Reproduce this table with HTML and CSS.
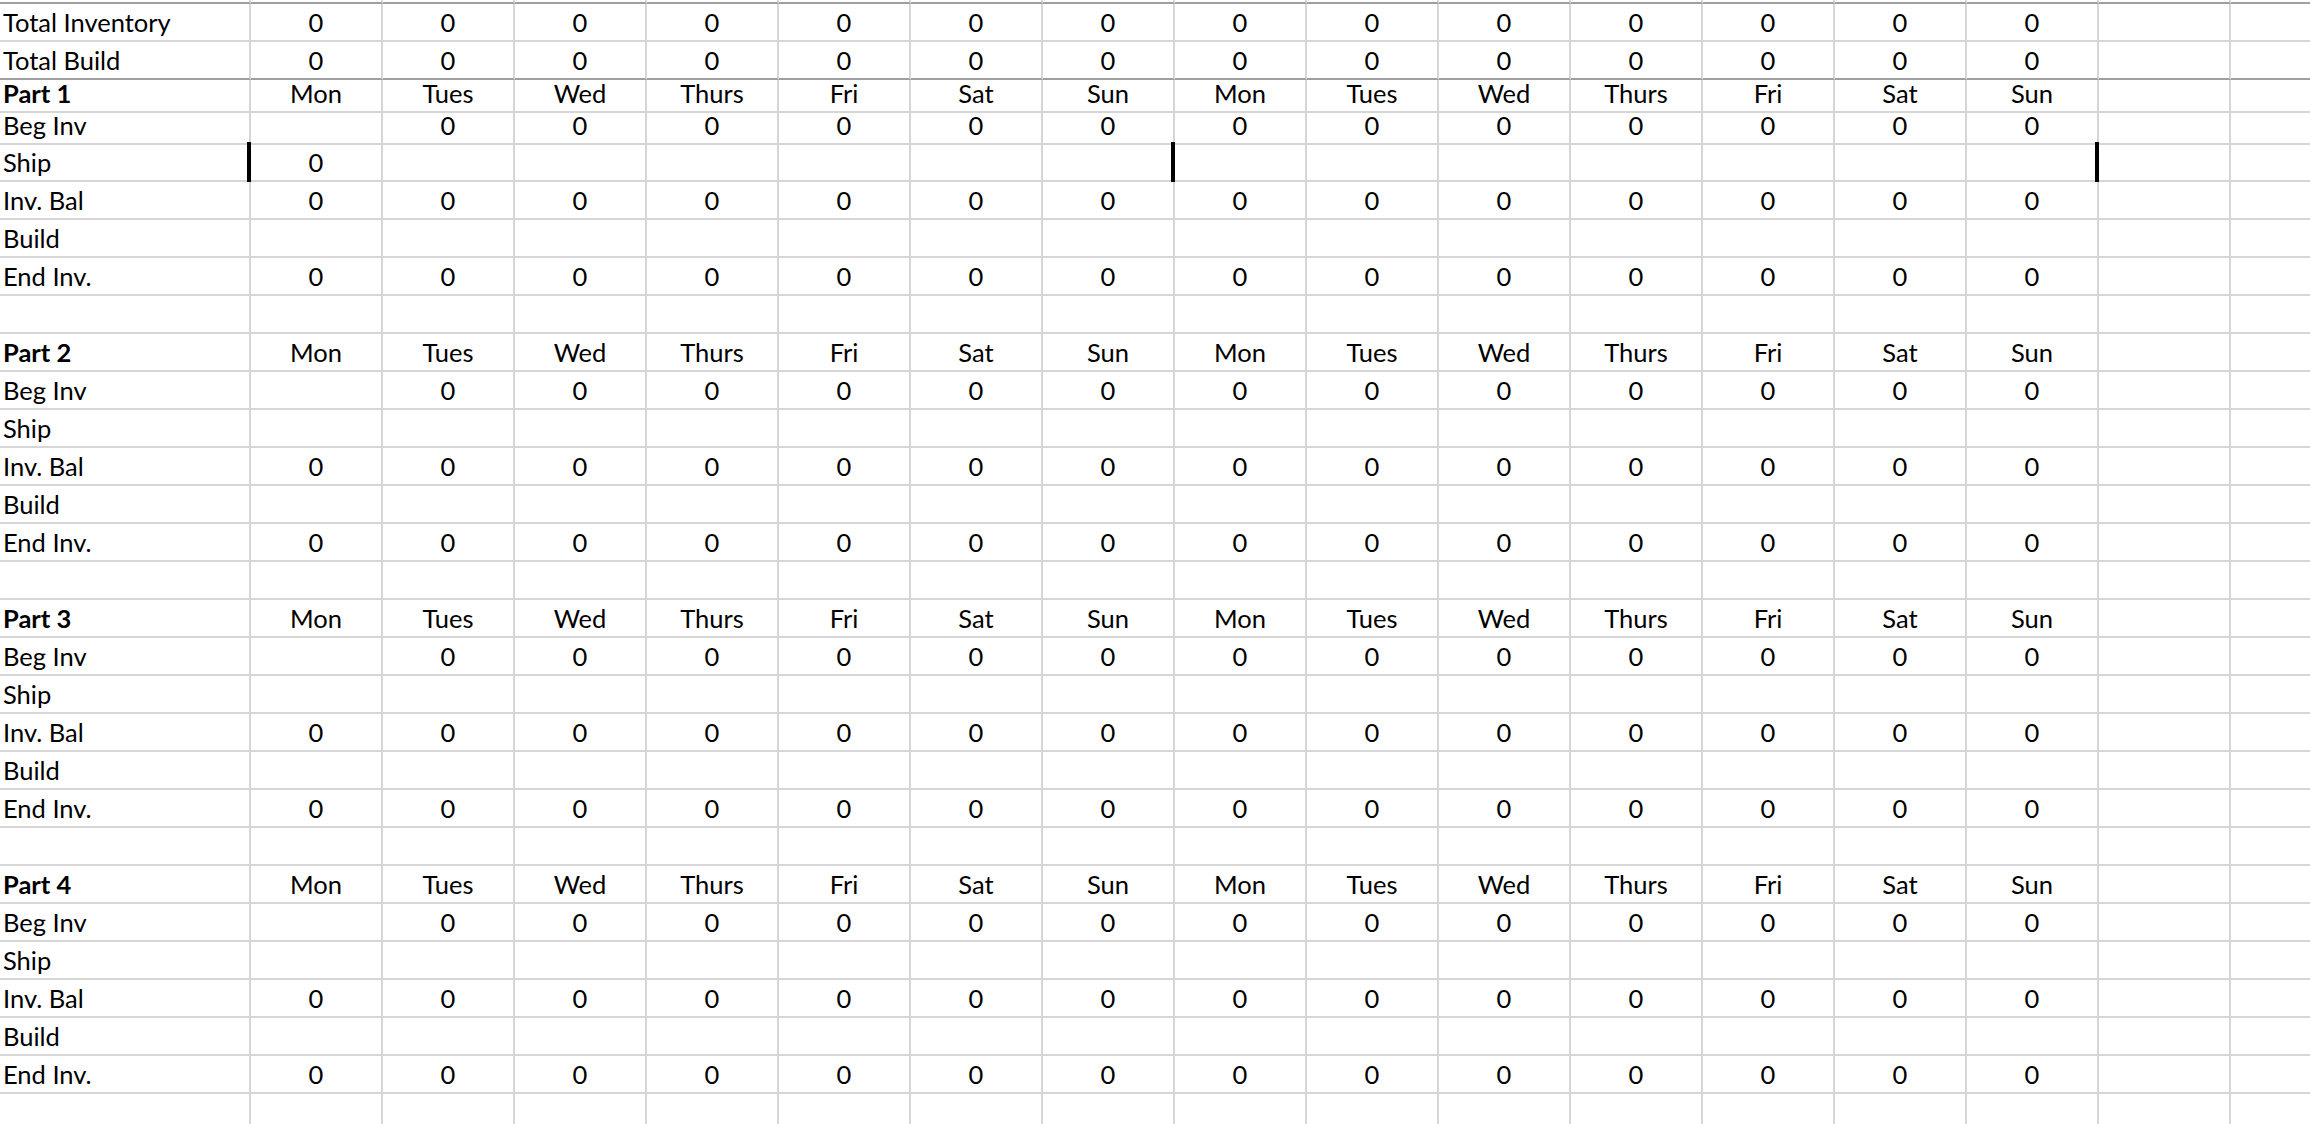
FILE: index.html
```html
<!DOCTYPE html>
<html>
<head>
<meta charset="utf-8">
<link rel="stylesheet" href="styles.css">
</head>
<body>
<div class="sheet">
  <div class="row spacer"><span></span><span></span><span></span><span></span><span></span><span></span><span></span><span></span><span></span><span></span><span></span><span></span><span></span><span></span><span></span><span></span><span></span></div>

  <div class="row"><span class="lab">Total Inventory</span><span>0</span><span>0</span><span>0</span><span>0</span><span>0</span><span>0</span><span>0</span><span>0</span><span>0</span><span>0</span><span>0</span><span>0</span><span>0</span><span>0</span><span></span><span></span></div>
  <div class="row dark"><span class="lab">Total Build</span><span>0</span><span>0</span><span>0</span><span>0</span><span>0</span><span>0</span><span>0</span><span>0</span><span>0</span><span>0</span><span>0</span><span>0</span><span>0</span><span>0</span><span></span><span></span></div>

  <div class="row short"><span class="lab b">Part 1</span><span>Mon</span><span>Tues</span><span>Wed</span><span>Thurs</span><span>Fri</span><span>Sat</span><span>Sun</span><span>Mon</span><span>Tues</span><span>Wed</span><span>Thurs</span><span>Fri</span><span>Sat</span><span>Sun</span><span></span><span></span></div>
  <div class="row short"><span class="lab">Beg Inv</span><span></span><span>0</span><span>0</span><span>0</span><span>0</span><span>0</span><span>0</span><span>0</span><span>0</span><span>0</span><span>0</span><span>0</span><span>0</span><span>0</span><span></span><span></span></div>
  <div class="row"><span class="lab">Ship</span><span class="bar">0</span><span></span><span></span><span></span><span></span><span></span><span></span><span class="bar"></span><span></span><span></span><span></span><span></span><span></span><span></span><span class="bar"></span><span></span></div>
  <div class="row"><span class="lab">Inv. Bal</span><span>0</span><span>0</span><span>0</span><span>0</span><span>0</span><span>0</span><span>0</span><span>0</span><span>0</span><span>0</span><span>0</span><span>0</span><span>0</span><span>0</span><span></span><span></span></div>
  <div class="row"><span class="lab">Build</span><span></span><span></span><span></span><span></span><span></span><span></span><span></span><span></span><span></span><span></span><span></span><span></span><span></span><span></span><span></span><span></span></div>
  <div class="row"><span class="lab">End Inv.</span><span>0</span><span>0</span><span>0</span><span>0</span><span>0</span><span>0</span><span>0</span><span>0</span><span>0</span><span>0</span><span>0</span><span>0</span><span>0</span><span>0</span><span></span><span></span></div>
  <div class="row"><span></span><span></span><span></span><span></span><span></span><span></span><span></span><span></span><span></span><span></span><span></span><span></span><span></span><span></span><span></span><span></span><span></span></div>

  <div class="row"><span class="lab b">Part 2</span><span>Mon</span><span>Tues</span><span>Wed</span><span>Thurs</span><span>Fri</span><span>Sat</span><span>Sun</span><span>Mon</span><span>Tues</span><span>Wed</span><span>Thurs</span><span>Fri</span><span>Sat</span><span>Sun</span><span></span><span></span></div>
  <div class="row"><span class="lab">Beg Inv</span><span></span><span>0</span><span>0</span><span>0</span><span>0</span><span>0</span><span>0</span><span>0</span><span>0</span><span>0</span><span>0</span><span>0</span><span>0</span><span>0</span><span></span><span></span></div>
  <div class="row"><span class="lab">Ship</span><span></span><span></span><span></span><span></span><span></span><span></span><span></span><span></span><span></span><span></span><span></span><span></span><span></span><span></span><span></span><span></span></div>
  <div class="row"><span class="lab">Inv. Bal</span><span>0</span><span>0</span><span>0</span><span>0</span><span>0</span><span>0</span><span>0</span><span>0</span><span>0</span><span>0</span><span>0</span><span>0</span><span>0</span><span>0</span><span></span><span></span></div>
  <div class="row"><span class="lab">Build</span><span></span><span></span><span></span><span></span><span></span><span></span><span></span><span></span><span></span><span></span><span></span><span></span><span></span><span></span><span></span><span></span></div>
  <div class="row"><span class="lab">End Inv.</span><span>0</span><span>0</span><span>0</span><span>0</span><span>0</span><span>0</span><span>0</span><span>0</span><span>0</span><span>0</span><span>0</span><span>0</span><span>0</span><span>0</span><span></span><span></span></div>
  <div class="row"><span></span><span></span><span></span><span></span><span></span><span></span><span></span><span></span><span></span><span></span><span></span><span></span><span></span><span></span><span></span><span></span><span></span></div>

  <div class="row"><span class="lab b">Part 3</span><span>Mon</span><span>Tues</span><span>Wed</span><span>Thurs</span><span>Fri</span><span>Sat</span><span>Sun</span><span>Mon</span><span>Tues</span><span>Wed</span><span>Thurs</span><span>Fri</span><span>Sat</span><span>Sun</span><span></span><span></span></div>
  <div class="row"><span class="lab">Beg Inv</span><span></span><span>0</span><span>0</span><span>0</span><span>0</span><span>0</span><span>0</span><span>0</span><span>0</span><span>0</span><span>0</span><span>0</span><span>0</span><span>0</span><span></span><span></span></div>
  <div class="row"><span class="lab">Ship</span><span></span><span></span><span></span><span></span><span></span><span></span><span></span><span></span><span></span><span></span><span></span><span></span><span></span><span></span><span></span><span></span></div>
  <div class="row"><span class="lab">Inv. Bal</span><span>0</span><span>0</span><span>0</span><span>0</span><span>0</span><span>0</span><span>0</span><span>0</span><span>0</span><span>0</span><span>0</span><span>0</span><span>0</span><span>0</span><span></span><span></span></div>
  <div class="row"><span class="lab">Build</span><span></span><span></span><span></span><span></span><span></span><span></span><span></span><span></span><span></span><span></span><span></span><span></span><span></span><span></span><span></span><span></span></div>
  <div class="row"><span class="lab">End Inv.</span><span>0</span><span>0</span><span>0</span><span>0</span><span>0</span><span>0</span><span>0</span><span>0</span><span>0</span><span>0</span><span>0</span><span>0</span><span>0</span><span>0</span><span></span><span></span></div>
  <div class="row"><span></span><span></span><span></span><span></span><span></span><span></span><span></span><span></span><span></span><span></span><span></span><span></span><span></span><span></span><span></span><span></span><span></span></div>

  <div class="row"><span class="lab b">Part 4</span><span>Mon</span><span>Tues</span><span>Wed</span><span>Thurs</span><span>Fri</span><span>Sat</span><span>Sun</span><span>Mon</span><span>Tues</span><span>Wed</span><span>Thurs</span><span>Fri</span><span>Sat</span><span>Sun</span><span></span><span></span></div>
  <div class="row"><span class="lab">Beg Inv</span><span></span><span>0</span><span>0</span><span>0</span><span>0</span><span>0</span><span>0</span><span>0</span><span>0</span><span>0</span><span>0</span><span>0</span><span>0</span><span>0</span><span></span><span></span></div>
  <div class="row"><span class="lab">Ship</span><span></span><span></span><span></span><span></span><span></span><span></span><span></span><span></span><span></span><span></span><span></span><span></span><span></span><span></span><span></span><span></span></div>
  <div class="row"><span class="lab">Inv. Bal</span><span>0</span><span>0</span><span>0</span><span>0</span><span>0</span><span>0</span><span>0</span><span>0</span><span>0</span><span>0</span><span>0</span><span>0</span><span>0</span><span>0</span><span></span><span></span></div>
  <div class="row"><span class="lab">Build</span><span></span><span></span><span></span><span></span><span></span><span></span><span></span><span></span><span></span><span></span><span></span><span></span><span></span><span></span><span></span><span></span></div>
  <div class="row"><span class="lab">End Inv.</span><span>0</span><span>0</span><span>0</span><span>0</span><span>0</span><span>0</span><span>0</span><span>0</span><span>0</span><span>0</span><span>0</span><span>0</span><span>0</span><span>0</span><span></span><span></span></div>
  <div class="row"><span></span><span></span><span></span><span></span><span></span><span></span><span></span><span></span><span></span><span></span><span></span><span></span><span></span><span></span><span></span><span></span><span></span></div>
</div>
</body>
</html>
```
FILE: styles.css
```css
html, body {
  margin: 0;
  padding: 0;
  background: #ffffff;
  overflow: hidden;
}

.sheet {
  width: 2363px;
  font-family: Lato, "Open Sans", "Liberation Sans", sans-serif;
  font-size: 25.5px;
  color: #000000;
}

.row {
  display: grid;
  grid-template-columns: 251px repeat(16, 132px);
  height: 38px;
}

.row.short {
  height: 32px;
}

.row.spacer {
  height: 4px;
}

.row > span {
  box-sizing: border-box;
  position: relative;
  display: flex;
  align-items: flex-end;
  justify-content: center;
  border-right: 2px solid #d6d6d6;
  border-bottom: 2px solid #d6d6d6;
  line-height: 26px;
  padding-bottom: 5px;
  white-space: nowrap;
}

.row.spacer > span,
.row.dark > span {
  border-bottom-color: #9f9f9f;
}

.row.spacer > span {
  padding: 0;
}

.row > span.lab {
  justify-content: flex-start;
  padding-left: 3px;
}

.row > span.b {
  font-weight: bold;
}

.row > span.bar::before {
  content: "";
  position: absolute;
  left: -4px;
  top: -2px;
  bottom: -2px;
  width: 4px;
  background: #000000;
}
```
